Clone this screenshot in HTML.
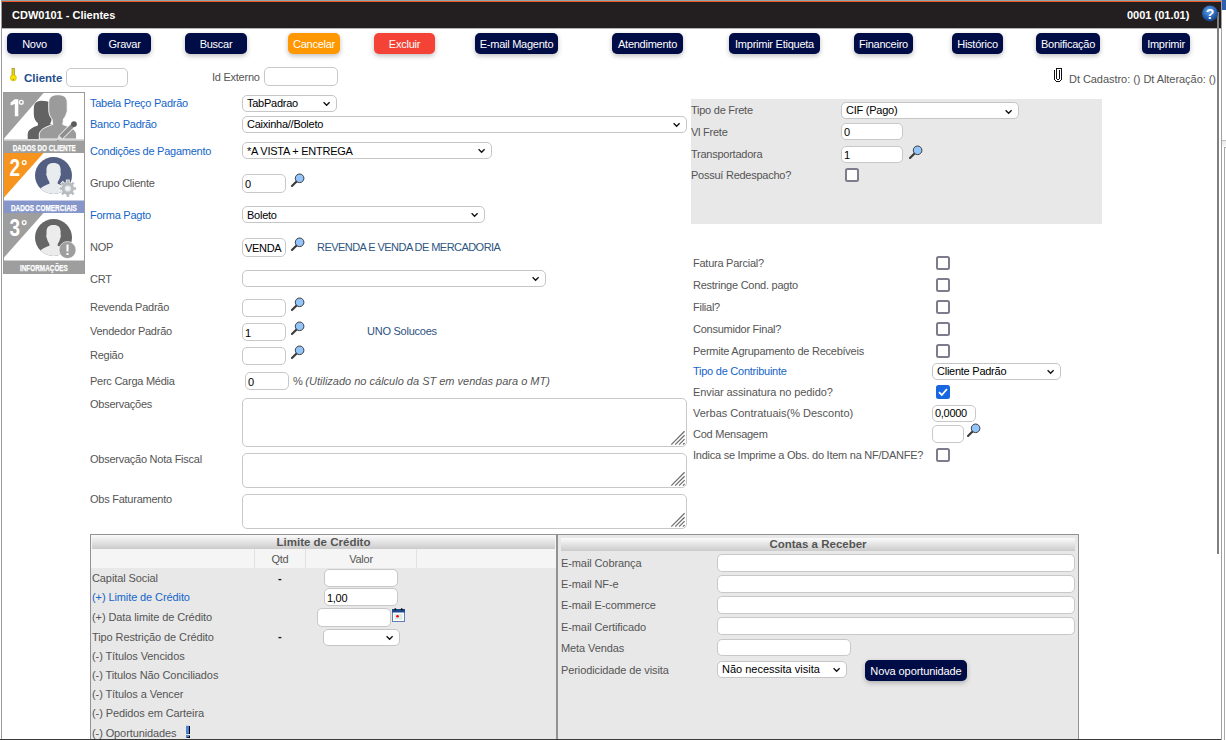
<!DOCTYPE html>
<html><head><meta charset="utf-8">
<style>
*{box-sizing:border-box;margin:0;padding:0}
html,body{width:1226px;height:740px;overflow:hidden;background:#fff;font-family:"Liberation Sans",sans-serif;position:relative}
.a{position:absolute}
.t{position:absolute;font-size:11px;line-height:11px;white-space:nowrap;color:#555;letter-spacing:-0.25px}
.bl{color:#1565c8}
.btn{position:absolute;top:33px;height:21px;border-radius:5px;background:#000c45;color:#fff;font-size:11px;line-height:23px;text-align:center;letter-spacing:-0.25px;box-shadow:0 2px 5px rgba(0,0,0,.25)}
.in{position:absolute;background:#fff;border:1px solid #c8c8c8;border-radius:5px;font-size:11px;color:#000;letter-spacing:-0.3px;white-space:nowrap;overflow:hidden}
.sel{position:absolute;background:#fff;border:1px solid #c6c6c6;border-radius:5px;font-size:11px;color:#000;letter-spacing:-0.25px;white-space:nowrap;overflow:hidden}
.chev{position:absolute;width:9px;height:6px}
.cb{position:absolute;width:14px;height:14px;border:2px solid #7c7c8c;border-radius:2.5px;background:#fff}
.mag{position:absolute;width:15px;height:15px}
.ta{position:absolute;background:#fff;border:1px solid #c8c8c8;border-radius:5px}
</style></head><body>
<!-- frame -->
<div class="a" style="left:1px;top:0;width:1px;height:740px;background:#9a9a9a"></div>
<div class="a" style="left:2px;top:0;width:1219px;height:1px;background:#90a4ae"></div>
<div class="a" style="left:2px;top:1px;width:1219px;height:1px;background:#f05a22"></div>
<div class="a" style="left:2px;top:2px;width:1219px;height:26px;background:#231f20"></div>
<div class="a" style="left:2px;top:28px;width:1219px;height:1px;background:#b4b4b4"></div>
<div class="a" style="left:1217px;top:12px;width:2px;height:542px;background:#7f817c"></div>
<div class="a" style="left:1221px;top:0;width:1px;height:740px;background:#a0a0a0"></div>
<div class="a" style="left:1222px;top:0;width:4px;height:10px;background:#2f5fae"></div>
<div class="a" style="left:1222px;top:140px;width:4px;height:1px;background:#c0c0c0"></div>
<div class="a" style="left:1222px;top:141px;width:4px;height:6px;background:linear-gradient(#e8e8e8,#fafafa)"></div>
<div class="a" style="left:1224px;top:147px;width:2px;height:593px;border-left:1px solid #a8a8a8;border-top:1px solid #a8a8a8"></div>

<div class="t" style="left:12px;top:10px;font-weight:bold;color:#fff;letter-spacing:0">CDW0101 - Clientes</div>
<div class="t" style="left:1127px;top:10px;font-weight:bold;color:#fff;letter-spacing:0">0001 (01.01)</div>
<svg class="a" style="left:1201px;top:4px" width="18" height="19" viewBox="0 0 18 19">
 <defs><radialGradient id="hg" cx="45%" cy="35%" r="65%"><stop offset="0" stop-color="#6aa8ea"/><stop offset="0.6" stop-color="#2a66b8"/><stop offset="1" stop-color="#123e80"/></radialGradient></defs>
 <circle cx="9" cy="9.4" r="8" fill="url(#hg)"/>
 <text x="9" y="14.6" text-anchor="middle" font-family="Liberation Sans" font-weight="bold" font-size="14" fill="#fff">?</text>
</svg>

<!-- buttons -->
<div class="btn" style="left:7px;width:55px">Novo</div>
<div class="btn" style="left:98px;width:53px">Gravar</div>
<div class="btn" style="left:185px;width:62px">Buscar</div>
<div class="btn" style="left:288px;width:52px;background:#ff9800">Cancelar</div>
<div class="btn" style="left:374px;width:61px;background:#f44336">Excluir</div>
<div class="btn" style="left:475px;width:83px">E-mail Magento</div>
<div class="btn" style="left:612px;width:71px">Atendimento</div>
<div class="btn" style="left:729px;width:91px">Imprimir Etiqueta</div>
<div class="btn" style="left:854px;width:59px">Financeiro</div>
<div class="btn" style="left:952px;width:51px">Histórico</div>
<div class="btn" style="left:1036px;width:64px">Bonificação</div>
<div class="btn" style="left:1142px;width:48px">Imprimir</div>

<!-- cliente row -->
<svg class="a" style="left:8px;top:65px" width="12" height="18" viewBox="8 65 12 18"><rect x="12" y="68.3" width="2.6" height="7.3" fill="#e6d400" stroke="#a08c30" stroke-width="0.7"/><circle cx="13.3" cy="77.8" r="3.1" fill="#f4e000" stroke="#c8a800" stroke-width="0.5"/><circle cx="13.3" cy="79.5" r="0.7" fill="#b09020"/></svg>
<div class="t" style="left:24px;top:73px;font-size:11.5px;font-weight:bold;color:#1f4e8c;letter-spacing:0">Cliente</div>
<div class="in" style="left:66px;top:68px;width:62px;height:19px"></div>
<div class="t" style="left:212px;top:72px">Id Externo</div>
<div class="in" style="left:264px;top:67px;width:74px;height:19px"></div>
<svg class="a" style="left:1054px;top:68px" width="8" height="14" viewBox="1054 68 8 14" shape-rendering="crispEdges" fill="#111"><rect x="1054" y="70" width="1" height="10"/><rect x="1055" y="80" width="1" height="1"/><rect x="1056" y="81" width="4" height="1"/><rect x="1060" y="80" width="1" height="1"/><rect x="1061" y="68" width="1" height="12"/><rect x="1056" y="68" width="5" height="1"/><rect x="1056" y="68" width="1" height="11"/><rect x="1057" y="79" width="2" height="1"/><rect x="1059" y="70" width="1" height="9"/></svg>
<div class="t" style="left:1069px;top:74px;letter-spacing:-0.05px">Dt Cadastro: () Dt Alteração: ()</div>


<!-- steps panel -->
<svg class="a" style="left:3px;top:92px" width="83" height="183" viewBox="3 92 83 183">
 <defs>
  <clipPath id="c2"><circle cx="53.5" cy="175.5" r="18.5"/></clipPath>
  <clipPath id="c3"><circle cx="53.5" cy="237.5" r="18.5"/></clipPath>
 </defs>
 <rect x="3.5" y="92.5" width="81" height="181" fill="#fff" stroke="#9a9a9a" stroke-width="1"/>
 <!-- step 1 -->
 <polygon points="4,93 43.5,93 4,138.5" fill="#9e9e9e"/>
 <path d="M14.6 99.3 L18.3 99.3 L18.3 116.3 L14.8 116.3 L14.8 103.9 L10.6 105.4 L10.6 102.4 Z" fill="#fff"/>
 <circle cx="21.3" cy="102.3" r="1.9" fill="none" stroke="#fff" stroke-width="1.3"/>
 <path d="M41.5 100.8 C36.3 100.8 33.8 103.6 33.8 108.5 L33.8 114 C33.8 118.3 35.4 121.2 37.9 123 L37.9 125.6 C32 127.6 28 129.8 27.7 134 L27.7 139 L56 139 L56 126 L50 124 C51.5 121.5 52.5 118 52.6 114 L52.6 108.5 C52.6 103.6 50 100.8 41.5 100.8 Z" fill="#636363"/>
 <path d="M57.9 94.7 C51.6 94.7 48.7 97.5 48.7 102.5 L48.7 109.5 C48.7 113.5 49.8 116.5 52 119 L52.7 124.5 C46 127 40 129 39.3 134 L39.3 139 L76.5 139 L76.5 134 C75.6 129.2 69.6 127 62.8 124.5 L63.5 119 C65.3 117 66.2 115 66.5 113 C67.3 112.5 67.4 110 67.2 108 L67.2 102.5 C67.2 97.5 64.2 94.7 57.9 94.7 Z" fill="#9b9b9b" stroke="#fff" stroke-width="0.9"/>
 <line x1="73.8" y1="124.3" x2="60.6" y2="137.5" stroke="#fff" stroke-width="5.6"/>
 <line x1="73.8" y1="124.3" x2="60.8" y2="137.3" stroke="#8e8e8e" stroke-width="4.2"/>
 <circle cx="74" cy="124.1" r="2.9" fill="#5c5c5c"/>
 <path d="M58.6 135.2 L62.8 139.4 L56.6 141.6 Z" fill="#e2e2e2"/>
 <path d="M57.5 139.2 L59.1 140.8 L56.2 142 Z" fill="#3a3a3a"/>
 <rect x="4" y="139" width="80" height="1.5" fill="#d8d8d8"/>
 <rect x="4" y="140.5" width="80" height="12.5" fill="#9e9e9e"/>
 <text x="12.8" y="151" font-family="Liberation Sans" font-weight="bold" font-size="8.6" fill="#fff" stroke="#fff" stroke-width="0.25" textLength="63" lengthAdjust="spacingAndGlyphs">DADOS DO CLIENTE</text>
 <!-- step 2 -->
 <polygon points="4,153 43.5,153 4,197.5" fill="#f7941d"/>
 <text transform="translate(9.6,176) scale(0.8,1)" font-family="Liberation Sans" font-weight="bold" font-size="23.7" fill="#fff">2</text>
 <circle cx="24.2" cy="162.6" r="1.9" fill="none" stroke="#fff" stroke-width="1.3"/>
 <circle cx="53.5" cy="175.5" r="18.5" fill="#535f82"/>
 <g clip-path="url(#c2)">
  <path d="M53.6 162.9 C48.6 162.9 46.5 165.5 46.5 169.5 L46.5 173.0 C46 173.5 46.2 175.5 46.8 176.0 C47.3 178.0 48 180.0 49.2 181.5 L49.5 183.8 C43 186.0 38 189.0 35 195.0 L35 197.0 L72 197.0 L72 195.0 C69 189.0 64 186.0 57.6 183.8 L57.9 181.5 C59.1 180.0 59.8 178.0 60.3 176.0 C60.9 175.5 61.1 173.5 60.6 173.0 L60.6 169.5 C60.6 165.5 58.6 162.9 53.6 162.9 Z" fill="#e9ecef"/>
 </g>
 <g transform="translate(67.8,188.5)" fill="#b9bcbf"><circle r="6.6" fill="#fff"/><rect stroke="#fff" stroke-width="1.2" x="-1.3" y="-8.3" width="2.6" height="3.5" transform="rotate(0)"/><rect stroke="#fff" stroke-width="1.2" x="-1.3" y="-8.3" width="2.6" height="3.5" transform="rotate(45)"/><rect stroke="#fff" stroke-width="1.2" x="-1.3" y="-8.3" width="2.6" height="3.5" transform="rotate(90)"/><rect stroke="#fff" stroke-width="1.2" x="-1.3" y="-8.3" width="2.6" height="3.5" transform="rotate(135)"/><rect stroke="#fff" stroke-width="1.2" x="-1.3" y="-8.3" width="2.6" height="3.5" transform="rotate(180)"/><rect stroke="#fff" stroke-width="1.2" x="-1.3" y="-8.3" width="2.6" height="3.5" transform="rotate(225)"/><rect stroke="#fff" stroke-width="1.2" x="-1.3" y="-8.3" width="2.6" height="3.5" transform="rotate(270)"/><rect stroke="#fff" stroke-width="1.2" x="-1.3" y="-8.3" width="2.6" height="3.5" transform="rotate(315)"/><circle r="6.2"/><rect x="-1.3" y="-8.3" width="2.6" height="3.5" transform="rotate(0)"/><rect x="-1.3" y="-8.3" width="2.6" height="3.5" transform="rotate(45)"/><rect x="-1.3" y="-8.3" width="2.6" height="3.5" transform="rotate(90)"/><rect x="-1.3" y="-8.3" width="2.6" height="3.5" transform="rotate(135)"/><rect x="-1.3" y="-8.3" width="2.6" height="3.5" transform="rotate(180)"/><rect x="-1.3" y="-8.3" width="2.6" height="3.5" transform="rotate(225)"/><rect x="-1.3" y="-8.3" width="2.6" height="3.5" transform="rotate(270)"/><rect x="-1.3" y="-8.3" width="2.6" height="3.5" transform="rotate(315)"/><circle r="3.1" fill="#e6e9eb"/><circle r="1.6" fill="#f6f7f8"/></g>
 <rect x="4" y="200.5" width="80" height="12.5" fill="#8696cb"/>
 <text x="10.9" y="211" font-family="Liberation Sans" font-weight="bold" font-size="8.6" fill="#fff" stroke="#fff" stroke-width="0.25" textLength="66" lengthAdjust="spacingAndGlyphs">DADOS COMERCIAIS</text>
 <!-- step 3 -->
 <polygon points="4,213 43.5,213 4,257.5" fill="#9e9e9e"/>
 <text transform="translate(9.6,236) scale(0.8,1)" font-family="Liberation Sans" font-weight="bold" font-size="23.7" fill="#fff">3</text>
 <circle cx="24.2" cy="222.6" r="1.9" fill="none" stroke="#fff" stroke-width="1.3"/>
 <circle cx="53.5" cy="237.5" r="18.5" fill="#666"/>
 <g clip-path="url(#c3)">
  <path d="M53.6 224.9 C48.6 224.9 46.5 227.5 46.5 231.5 L46.5 235.0 C46 235.5 46.2 237.5 46.8 238.0 C47.3 240.0 48 242.0 49.2 243.5 L49.5 245.8 C43 248.0 38 251.0 35 257.0 L35 259.0 L72 259.0 L72 257.0 C69 251.0 64 248.0 57.6 245.8 L57.9 243.5 C59.1 242.0 59.8 240.0 60.3 238.0 C60.9 237.5 61.1 235.5 60.6 235.0 L60.6 231.5 C60.6 227.5 58.6 224.9 53.6 224.9 Z" fill="#ececec"/>
 </g>
 <circle cx="67.5" cy="250" r="8.5" fill="#9e9e9e" stroke="#fff" stroke-width="0.6"/>
 <rect x="66.5" y="244.5" width="2" height="7" fill="#fff"/>
 <rect x="66.5" y="253" width="2" height="2" fill="#fff"/>
 <rect x="4" y="260.5" width="80" height="13" fill="#9e9e9e"/>
 <text x="19.9" y="270.7" font-family="Liberation Sans" font-weight="bold" font-size="8.6" fill="#fff" stroke="#fff" stroke-width="0.25" textLength="48" lengthAdjust="spacingAndGlyphs">INFORMAÇÕES</text>
</svg>

<!-- form left -->
<div class="t bl" style="left:90px;top:98px;">Tabela Preço Padrão</div>
<div class="sel" style="left:242px;top:95px;width:95px;height:17px;line-height:15px;padding-left:4px">TabPadrao</div><svg class="chev" style="left:322px;top:101px" viewBox="0 0 9 6"><path d="M1.6 1.3 L4.6 4.2 L7.6 1.3" fill="none" stroke="#111" stroke-width="1.35"/></svg>
<div class="t bl" style="left:90px;top:119px;">Banco Padrão</div>
<div class="sel" style="left:242px;top:116px;width:445px;height:17px;line-height:15px;padding-left:4px">Caixinha//Boleto</div><svg class="chev" style="left:672px;top:122px" viewBox="0 0 9 6"><path d="M1.6 1.3 L4.6 4.2 L7.6 1.3" fill="none" stroke="#111" stroke-width="1.35"/></svg>
<div class="t bl" style="left:90px;top:146px;">Condições de Pagamento</div>
<div class="sel" style="left:242px;top:142px;width:250px;height:17px;line-height:15px;padding-left:4px;padding-top:1px">*A VISTA + ENTREGA</div><svg class="chev" style="left:477px;top:148px" viewBox="0 0 9 6"><path d="M1.6 1.3 L4.6 4.2 L7.6 1.3" fill="none" stroke="#111" stroke-width="1.35"/></svg>
<div class="t " style="left:90px;top:178px;">Grupo Cliente</div>
<div class="in" style="left:242px;top:174px;width:44px;height:19px;line-height:19px;padding-left:2px">0</div>
<svg class="mag" style="left:290px;top:173px" viewBox="0 0 15 15"><path d="M2 13 L6.5 8.5" stroke="#3a3a3a" stroke-width="2.1" stroke-linecap="round"/><circle cx="9.6" cy="5.3" r="4.3" fill="#92c5fb" stroke="#3c3c3c" stroke-width="1"/></svg>
<div class="t bl" style="left:90px;top:210px;">Forma Pagto</div>
<div class="sel" style="left:242px;top:206px;width:243px;height:17px;line-height:15px;padding-left:4px;padding-top:1px">Boleto</div><svg class="chev" style="left:470px;top:212px" viewBox="0 0 9 6"><path d="M1.6 1.3 L4.6 4.2 L7.6 1.3" fill="none" stroke="#111" stroke-width="1.35"/></svg>
<div class="t " style="left:90px;top:242px;">NOP</div>
<div class="in" style="left:242px;top:238px;width:44px;height:19px;line-height:19px;padding-left:2px">VENDA</div>
<svg class="mag" style="left:290px;top:237px" viewBox="0 0 15 15"><path d="M2 13 L6.5 8.5" stroke="#3a3a3a" stroke-width="2.1" stroke-linecap="round"/><circle cx="9.6" cy="5.3" r="4.3" fill="#92c5fb" stroke="#3c3c3c" stroke-width="1"/></svg>
<div class="t " style="left:317px;top:242px;color:#2e5580;letter-spacing:-0.55px">REVENDA E VENDA DE MERCADORIA</div>
<div class="t " style="left:90px;top:274px;">CRT</div>
<div class="sel" style="left:242px;top:270px;width:304px;height:17px;line-height:15px;padding-left:4px"></div><svg class="chev" style="left:531px;top:276px" viewBox="0 0 9 6"><path d="M1.6 1.3 L4.6 4.2 L7.6 1.3" fill="none" stroke="#111" stroke-width="1.35"/></svg>
<div class="t " style="left:90px;top:302px;">Revenda Padrão</div>
<div class="in" style="left:242px;top:299px;width:44px;height:18px;line-height:18px;padding-left:2px"></div>
<svg class="mag" style="left:290px;top:297px" viewBox="0 0 15 15"><path d="M2 13 L6.5 8.5" stroke="#3a3a3a" stroke-width="2.1" stroke-linecap="round"/><circle cx="9.6" cy="5.3" r="4.3" fill="#92c5fb" stroke="#3c3c3c" stroke-width="1"/></svg>
<div class="t " style="left:90px;top:326px;">Vendedor Padrão</div>
<div class="in" style="left:242px;top:323px;width:44px;height:18px;line-height:18px;padding-left:2px">1</div>
<svg class="mag" style="left:290px;top:321px" viewBox="0 0 15 15"><path d="M2 13 L6.5 8.5" stroke="#3a3a3a" stroke-width="2.1" stroke-linecap="round"/><circle cx="9.6" cy="5.3" r="4.3" fill="#92c5fb" stroke="#3c3c3c" stroke-width="1"/></svg>
<div class="t " style="left:367px;top:326px;color:#2b527f">UNO Solucoes</div>
<div class="t " style="left:90px;top:350px;">Região</div>
<div class="in" style="left:242px;top:347px;width:44px;height:18px;line-height:18px;padding-left:2px"></div>
<svg class="mag" style="left:290px;top:345px" viewBox="0 0 15 15"><path d="M2 13 L6.5 8.5" stroke="#3a3a3a" stroke-width="2.1" stroke-linecap="round"/><circle cx="9.6" cy="5.3" r="4.3" fill="#92c5fb" stroke="#3c3c3c" stroke-width="1"/></svg>
<div class="t " style="left:90px;top:376px;">Perc Carga Média</div>
<div class="in" style="left:245px;top:372px;width:44px;height:18px;line-height:18px;padding-left:2px">0</div>
<div class="t " style="left:293px;top:376px;">% <i style="letter-spacing:0">(Utilizado no cálculo da ST em vendas para o MT)</i></div>
<div class="t " style="left:90px;top:399px;">Observações</div>
<div class="ta" style="left:242px;top:398px;width:445px;height:49px"></div><svg class="a" style="left:670px;top:430px" width="16" height="16" viewBox="0 0 16 16"><path d="M1.3 14.6 L14.6 1.3 M5.2 14.6 L14.6 5.2 M9.1 14.6 L14.6 9.1 M13 14.6 L14.6 13" stroke="#707070" stroke-width="1.25"/></svg>
<div class="t " style="left:90px;top:454px;">Observação Nota Fiscal</div>
<div class="ta" style="left:242px;top:453px;width:445px;height:35px"></div><svg class="a" style="left:670px;top:471px" width="16" height="16" viewBox="0 0 16 16"><path d="M1.3 14.6 L14.6 1.3 M5.2 14.6 L14.6 5.2 M9.1 14.6 L14.6 9.1 M13 14.6 L14.6 13" stroke="#707070" stroke-width="1.25"/></svg>
<div class="t " style="left:90px;top:494px;">Obs Faturamento</div>
<div class="ta" style="left:242px;top:494px;width:445px;height:35px"></div><svg class="a" style="left:670px;top:512px" width="16" height="16" viewBox="0 0 16 16"><path d="M1.3 14.6 L14.6 1.3 M5.2 14.6 L14.6 5.2 M9.1 14.6 L14.6 9.1 M13 14.6 L14.6 13" stroke="#707070" stroke-width="1.25"/></svg>

<!-- right -->
<div class="a" style="left:691px;top:99px;width:411px;height:125px;background:#e8e8e8"></div>
<div class="t " style="left:691px;top:105px;">Tipo de Frete</div>
<div class="sel" style="left:841px;top:102px;width:178px;height:17px;line-height:14px;padding-left:4px">CIF (Pago)</div><svg class="chev" style="left:1004px;top:109px" viewBox="0 0 9 6"><path d="M1.6 1.3 L4.6 4.2 L7.6 1.3" fill="none" stroke="#111" stroke-width="1.35"/></svg>
<div class="t " style="left:691px;top:127px;">Vl Frete</div>
<div class="in" style="left:841px;top:123px;width:62px;height:17px;line-height:16px;padding-left:2px">0</div>
<div class="t " style="left:691px;top:149px;">Transportadora</div>
<div class="in" style="left:841px;top:146px;width:62px;height:17px;line-height:16px;padding-left:2px">1</div>
<svg class="mag" style="left:908px;top:145px" viewBox="0 0 15 15"><path d="M2 13 L6.5 8.5" stroke="#3a3a3a" stroke-width="2.1" stroke-linecap="round"/><circle cx="9.6" cy="5.3" r="4.3" fill="#92c5fb" stroke="#3c3c3c" stroke-width="1"/></svg>
<div class="t " style="left:691px;top:170px;">Possuí Redespacho?</div>
<div class="cb" style="left:845px;top:168px"></div>
<div class="t " style="left:693px;top:258px;">Fatura Parcial?</div>
<div class="cb" style="left:936px;top:256px"></div>
<div class="t " style="left:693px;top:280px;">Restringe Cond. pagto</div>
<div class="cb" style="left:936px;top:278px"></div>
<div class="t " style="left:693px;top:302px;">Filial?</div>
<div class="cb" style="left:936px;top:300px"></div>
<div class="t " style="left:693px;top:324px;">Consumidor Final?</div>
<div class="cb" style="left:936px;top:322px"></div>
<div class="t " style="left:693px;top:346px;">Permite Agrupamento de Recebíveis</div>
<div class="cb" style="left:936px;top:344px"></div>
<div class="t bl" style="left:693px;top:366px;">Tipo de Contribuinte</div>
<div class="sel" style="left:932px;top:363px;width:129px;height:17px;line-height:15px;padding-left:4px">Cliente Padrão</div><svg class="chev" style="left:1046px;top:369px" viewBox="0 0 9 6"><path d="M1.6 1.3 L4.6 4.2 L7.6 1.3" fill="none" stroke="#111" stroke-width="1.35"/></svg>
<div class="t " style="left:693px;top:387px;letter-spacing:-0.1px">Enviar assinatura no pedido?</div>
<svg class="a" style="left:936px;top:385px" width="14" height="14" viewBox="0 0 14 14"><rect x="0" y="0" width="14" height="14" rx="2.5" fill="#1866e0"/><path d="M3 7.2 L5.8 10 L11 4" fill="none" stroke="#fff" stroke-width="1.8"/></svg>
<div class="t " style="left:693px;top:408px;letter-spacing:0">Verbas Contratuais(% Desconto)</div>
<div class="in" style="left:932px;top:405px;width:44px;height:17px;line-height:15px;padding-left:2px">0,0000</div>
<div class="t " style="left:693px;top:429px;">Cod Mensagem</div>
<div class="in" style="left:932px;top:425px;width:32px;height:18px;line-height:18px;padding-left:2px"></div>
<svg class="mag" style="left:966px;top:423px" viewBox="0 0 15 15"><path d="M2 13 L6.5 8.5" stroke="#3a3a3a" stroke-width="2.1" stroke-linecap="round"/><circle cx="9.6" cy="5.3" r="4.3" fill="#92c5fb" stroke="#3c3c3c" stroke-width="1"/></svg>
<div class="t " style="left:693px;top:450px;">Indica se Imprime a Obs. do Item na NF/DANFE?</div>
<div class="cb" style="left:936px;top:448px"></div>

<!-- bottom panels -->
<div class="a" style="left:90px;top:534px;width:468px;height:206px;background:#e8e8e8;border:1px solid #929292;border-bottom:none;border-right:2px solid #929292"></div>
<div class="a" style="left:91px;top:535px;width:465px;height:14px;background:#f6f6f6"></div>
<div class="a" style="left:92px;top:535px;width:463px;height:14px;background:linear-gradient(#fbfbfb,#cbcbcb)"></div>
<div class="t" style="left:91px;top:537px;width:465px;text-align:center;font-weight:bold;font-size:11.5px;color:#555;letter-spacing:0">Limite de Crédito</div>
<div class="a" style="left:91px;top:549px;width:465px;height:19px;background:#f5f5f5"></div>
<div class="a" style="left:254px;top:549px;width:1px;height:19px;background:#e2e2e2"></div>
<div class="a" style="left:305px;top:549px;width:1px;height:19px;background:#e2e2e2"></div>
<div class="a" style="left:416px;top:549px;width:1px;height:19px;background:#e2e2e2"></div>
<div class="t" style="left:255px;top:554px;width:50px;text-align:center">Qtd</div>
<div class="t" style="left:306px;top:554px;width:110px;text-align:center">Valor</div>
<div class="t " style="left:92px;top:573px;letter-spacing:-0.1px;">Capital Social</div>
<div class="t bl" style="left:92px;top:592px;letter-spacing:-0.1px;">(+) Limite de Crédito</div>
<div class="t " style="left:92px;top:612px;letter-spacing:-0.1px;">(+) Data limite de Crédito</div>
<div class="t " style="left:92px;top:632px;letter-spacing:-0.1px;">Tipo Restrição de Crédito</div>
<div class="t " style="left:92px;top:651px;letter-spacing:-0.1px;">(-) Títulos Vencidos</div>
<div class="t " style="left:92px;top:670px;letter-spacing:-0.1px;">(-) Titulos Não Conciliados</div>
<div class="t " style="left:92px;top:689px;letter-spacing:-0.1px;">(-) Títulos a Vencer</div>
<div class="t " style="left:92px;top:708px;letter-spacing:-0.1px;">(-) Pedidos em Carteira</div>
<div class="t " style="left:92px;top:728px;letter-spacing:-0.1px;">(-) Oportunidades</div>
<div class="t " style="left:278px;top:573px;color:#111;font-weight:bold">-</div>
<div class="t " style="left:278px;top:631px;color:#111;font-weight:bold">-</div>
<div class="in" style="left:324px;top:569px;width:74px;height:18px;line-height:18px;padding-left:2px"></div>
<div class="in" style="left:324px;top:588px;width:74px;height:18px;line-height:18px;padding-left:2px">1,00</div>
<div class="in" style="left:317px;top:608px;width:74px;height:19px;line-height:19px;padding-left:2px"></div>
<svg class="a" style="left:392px;top:608px" width="13" height="14" viewBox="0 0 13 14"><rect x="0.5" y="1.5" width="12" height="12" fill="#fff" stroke="#5b80b6" stroke-width="1"/><rect x="0" y="1" width="13" height="3.5" fill="#1c4a8e"/><circle cx="3.3" cy="1.2" r="1" fill="#000"/><circle cx="9.7" cy="1.2" r="1" fill="#000"/><rect x="2.5" y="6" width="8" height="5.5" fill="#d8ece8"/><circle cx="5.5" cy="8.2" r="1.3" fill="#f00"/></svg>
<div class="sel" style="left:323px;top:629px;width:77px;height:17px;line-height:15px;padding-left:4px"></div><svg class="chev" style="left:385px;top:635px" viewBox="0 0 9 6"><path d="M1.6 1.3 L4.6 4.2 L7.6 1.3" fill="none" stroke="#111" stroke-width="1.35"/></svg>
<svg class="a" style="left:185px;top:725px" width="6" height="14" viewBox="0 0 6 14"><rect x="1.5" y="1" width="3.5" height="8" fill="#000"/><rect x="1" y="0.8" width="3" height="8" fill="#4d82d2"/><rect x="1.5" y="10.5" width="3.5" height="2.5" fill="#000"/><rect x="1" y="10" width="3" height="2.3" fill="#4d82d2"/></svg>
<div class="a" style="left:558px;top:534px;width:521px;height:206px;background:#e8e8e8;border-top:1px solid #929292;border-right:1px solid #929292"></div>
<div class="a" style="left:561px;top:538px;width:514px;height:13px;background:linear-gradient(#fbfbfb,#cbcbcb)"></div>
<div class="t" style="left:561px;top:539px;width:514px;text-align:center;font-weight:bold;font-size:11.5px;color:#555;letter-spacing:0">Contas a Receber</div>
<div class="t " style="left:561px;top:558px;letter-spacing:-0.1px;">E-mail Cobrança</div>
<div class="in" style="left:717px;top:554px;width:358px;height:18px;line-height:18px;padding-left:2px"></div>
<div class="t " style="left:561px;top:579px;letter-spacing:-0.1px;">E-mail NF-e</div>
<div class="in" style="left:717px;top:575px;width:358px;height:18px;line-height:18px;padding-left:2px"></div>
<div class="t " style="left:561px;top:600px;letter-spacing:-0.1px;">E-mail E-commerce</div>
<div class="in" style="left:717px;top:596px;width:358px;height:18px;line-height:18px;padding-left:2px"></div>
<div class="t " style="left:561px;top:622px;letter-spacing:-0.1px;">E-mail Certificado</div>
<div class="in" style="left:717px;top:617px;width:358px;height:18px;line-height:18px;padding-left:2px"></div>
<div class="t " style="left:561px;top:643px;letter-spacing:-0.1px;">Meta Vendas</div>
<div class="in" style="left:717px;top:639px;width:134px;height:17px;line-height:17px;padding-left:2px"></div>
<div class="t " style="left:561px;top:665px;letter-spacing:-0.1px;">Periodicidade de visita</div>
<div class="sel" style="left:717px;top:661px;width:130px;height:17px;line-height:15px;padding-left:4px;letter-spacing:0">Não necessita visita</div><svg class="chev" style="left:832px;top:667px" viewBox="0 0 9 6"><path d="M1.6 1.3 L4.6 4.2 L7.6 1.3" fill="none" stroke="#111" stroke-width="1.35"/></svg>
<div class="btn" style="left:865px;top:660px;width:102px;height:21px;letter-spacing:-0.1px">Nova oportunidade</div>
<div class="a" style="left:0;top:739px;width:1221px;height:1px;background:#3a3a3a"></div>
</body></html>
